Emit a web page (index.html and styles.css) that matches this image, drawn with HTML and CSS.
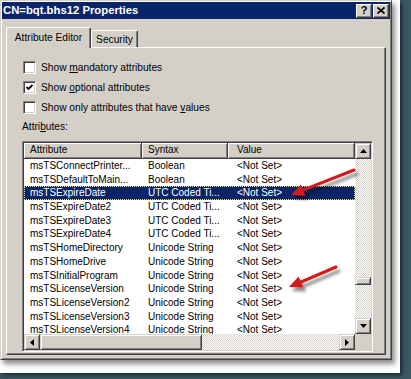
FILE: index.html
```html
<!DOCTYPE html>
<html>
<head>
<meta charset="utf-8">
<title>CN=bqt.bhs12 Properties</title>
<link rel="stylesheet" href="styles.css">
</head>
<body>
<div class="sheet">
  <div class="dialog">
    <div class="titlebar">
      <span class="title">CN=bqt.bhs12 Properties</span>
      <span class="tbtn help">?</span>
      <span class="tbtn close"><svg width="8" height="7" viewBox="0 0 8 7"><path d="M0.5 0.5 L7.5 6.5 M7.5 0.5 L0.5 6.5" stroke="#000" stroke-width="1.7"/></svg></span>
    </div>
    <div class="tabs">
      <div class="tab active">Attribute Editor</div>
      <div class="tab other">Security</div>
    </div>
    <div class="panel">
      <div class="check"><span class="box"></span><span>Show <u>m</u>andatory attributes</span></div>
      <div class="check"><span class="box"><svg width="9" height="9" viewBox="0 0 9 9"><path d="M1.5 4 L3.5 6 L7.5 2" fill="none" stroke="#000" stroke-width="1.8"/></svg></span><span>Show <u>o</u>ptional attributes</span></div>
      <div class="check"><span class="box"></span><span>Show only attributes that have <u>v</u>alues</span></div>
      <div class="caption">Attri<u>b</u>utes:</div>
      <div class="listbox">
        <div class="view">
          <div class="row head"><span>Attribute</span><span>Syntax</span><span>Value</span></div>
          <div class="row"><span>msTSConnectPrinter...</span><span>Boolean</span><span>&lt;Not Set&gt;</span></div>
          <div class="row"><span>msTSDefaultToMain...</span><span>Boolean</span><span>&lt;Not Set&gt;</span></div>
          <div class="row sel"><span>msTSExpireDate</span><span>UTC Coded Ti...</span><span>&lt;Not Set&gt;</span></div>
          <div class="row"><span>msTSExpireDate2</span><span>UTC Coded Ti...</span><span>&lt;Not Set&gt;</span></div>
          <div class="row"><span>msTSExpireDate3</span><span>UTC Coded Ti...</span><span>&lt;Not Set&gt;</span></div>
          <div class="row"><span>msTSExpireDate4</span><span>UTC Coded Ti...</span><span>&lt;Not Set&gt;</span></div>
          <div class="row"><span>msTSHomeDirectory</span><span>Unicode String</span><span>&lt;Not Set&gt;</span></div>
          <div class="row"><span>msTSHomeDrive</span><span>Unicode String</span><span>&lt;Not Set&gt;</span></div>
          <div class="row"><span>msTSInitialProgram</span><span>Unicode String</span><span>&lt;Not Set&gt;</span></div>
          <div class="row"><span>msTSLicenseVersion</span><span>Unicode String</span><span>&lt;Not Set&gt;</span></div>
          <div class="row"><span>msTSLicenseVersion2</span><span>Unicode String</span><span>&lt;Not Set&gt;</span></div>
          <div class="row"><span>msTSLicenseVersion3</span><span>Unicode String</span><span>&lt;Not Set&gt;</span></div>
          <div class="row"><span>msTSLicenseVersion4</span><span>Unicode String</span><span>&lt;Not Set&gt;</span></div>
        </div>
        <div class="vscroll">
          <span class="sbtn"><svg width="7" height="4" viewBox="0 0 7 4"><path d="M3.5 0 L7 4 L0 4 Z" fill="#000"/></svg></span>
          <div class="vtrack"><span class="gap"></span><span class="thumb"></span></div>
          <span class="sbtn"><svg width="7" height="4" viewBox="0 0 7 4"><path d="M0 0 L7 0 L3.5 4 Z" fill="#000"/></svg></span>
        </div>
        <div class="hscroll">
          <span class="sbtn"><svg width="4" height="7" viewBox="0 0 4 7"><path d="M0 3.5 L4 0 L4 7 Z" fill="#000"/></svg></span>
          <span class="thumb hthumb"></span>
          <span class="htrack"></span>
          <span class="sbtn"><svg width="4" height="7" viewBox="0 0 4 7"><path d="M0 0 L4 3.5 L0 7 Z" fill="#000"/></svg></span>
        </div>
        <div class="corner"></div>
      </div>
    </div>
  </div>
  <svg class="arrows" width="411" height="379" viewBox="0 0 411 379">
    <defs>
      <filter id="sh" x="-30%" y="-50%" width="180%" height="220%">
        <feDropShadow dx="3" dy="4" stdDeviation="1.8" flood-color="#000" flood-opacity="0.45"/>
      </filter>
    </defs>
    <g filter="url(#sh)" fill="#d21a1a" stroke="#d21a1a">
      <line x1="354" y1="170" x2="303" y2="190.2" stroke-width="3" stroke-linecap="round"/>
      <polygon points="291,195 305.3,195.8 300.9,184.6" stroke="none"/>
      <line x1="336" y1="267" x2="301" y2="282" stroke-width="3" stroke-linecap="round"/>
      <polygon points="289,287 303.3,287.4 298.6,276.4" stroke="none"/>
    </g>
  </svg>
</div>
</body>
</html>
```

FILE: styles.css
```css
* { box-sizing: border-box; margin: 0; padding: 0; }
html, body { width: 411px; height: 379px; }
body {
  background: #3b5764;
  overflow: hidden;
  font-family: "Liberation Sans", Arial, sans-serif;
  font-size: 10.2px;
  color: #000;
}
.sheet {
  position: relative;
  width: 400px;
  height: 373px;
  background: #fff;
  box-shadow: 2px 2px 4px rgba(0,0,0,.55);
}
.dialog {
  width: 392px;
  height: 360px;
  background: #d4d0c8;
  border: 1px solid;
  border-color: #d4d0c8 #404040 #404040 #d4d0c8;
  box-shadow: inset 1px 1px #fff, inset -1px -1px #808080, 3px 4px 5px rgba(0,0,0,.45);
  padding: 1px;
  display: flex;
  flex-direction: column;
}
.titlebar {
  height: 17px;
  flex: none;
  background: #0a246a;
  display: flex;
  align-items: center;
  padding: 0 1px;
  gap: 1px;
}
.title {
  flex: 1;
  color: #fff;
  font-weight: bold;
  font-size: 11.3px;
  line-height: 17px;
  white-space: nowrap;
}
.tbtn {
  width: 16px;
  height: 14px;
  background: #d4d0c8;
  border: 1px solid;
  border-color: #fff #404040 #404040 #fff;
  box-shadow: inset -1px -1px #808080;
  display: flex;
  align-items: center;
  justify-content: center;
  font-weight: bold;
  font-size: 11px;
  line-height: 1;
}
.tabs {
  flex: none;
  height: 28px;
  display: flex;
  align-items: flex-end;
  padding-left: 4px;
}
.tab {
  text-align: center;
  background: #d4d0c8;
  border: 1px solid;
  border-bottom: 0;
  border-color: #fff #404040 transparent #fff;
  box-shadow: inset -1px 0 #808080;
  border-radius: 2px 2px 0 0;
  line-height: 15px;
  white-space: nowrap;
}
.tab.active {
  width: 85px;
  height: 21px;
  padding-top: 2px;
  margin-bottom: -1px;
  position: relative;
  z-index: 1;
}
.tab.other {
  width: 47px;
  height: 17px;
  padding-top: 1px;
}
.panel {
  flex: none;
  width: 380px;
  height: 308px;
  margin-left: 4px;
  border: 1px solid;
  border-color: #fff #404040 #404040 #fff;
  box-shadow: inset -1px -1px #808080;
  padding: 9px 10px 0 15px;
  display: flex;
  flex-direction: column;
}
.check {
  height: 20px;
  display: flex;
  align-items: center;
  gap: 5px;
  padding-left: 1px;
  white-space: nowrap;
}
.box {
  width: 13px;
  height: 13px;
  flex: none;
  background: #fff;
  border: 1px solid;
  border-color: #808080 #fff #fff #808080;
  box-shadow: inset 1px 1px #404040, inset -1px -1px #d4d0c8;
  display: flex;
  align-items: center;
  justify-content: center;
}
.caption {
  height: 20px;
  line-height: 20px;
}
.listbox {
  width: 351px;
  height: 211px;
  margin-top: 4px;
  border: 1px solid;
  border-color: #808080 #fff #fff #808080;
  box-shadow: inset 1px 1px #404040, inset -1px -1px #d4d0c8;
  padding: 1px;
  background: #fff;
  display: grid;
  grid-template-columns: 331px 16px;
  grid-template-rows: 191px 16px;
}
.view {
  overflow: hidden;
  font-size: 10px;
  background: #fff;
}
.row {
  display: grid;
  grid-template-columns: 118px 86px 127px;
  height: 13.7px;
  line-height: 13.7px;
  white-space: nowrap;
}
.row span {
  padding-left: 6px;
  overflow: hidden;
}
.row span:nth-child(3) { padding-left: 9px; }
.row.head {
  height: 16px;
  line-height: 14px;
}
.row.head span {
  background: #d4d0c8;
  border-right: 1px solid #404040;
  border-bottom: 1px solid #404040;
  box-shadow: inset 1px 1px #fff, inset -1px -1px #808080;
}
.row.sel {
  background: #0a246a;
  color: #fff;
  outline: 1px dotted #e8e0a0;
  outline-offset: -1px;
}
.sbtn, .thumb {
  background: #d4d0c8;
  border: 1px solid;
  border-color: #d4d0c8 #404040 #404040 #d4d0c8;
  box-shadow: inset 1px 1px #fff, inset -1px -1px #808080;
}
.sbtn {
  width: 16px;
  height: 16px;
  flex: none;
  display: flex;
  align-items: center;
  justify-content: center;
}
.vscroll {
  display: flex;
  flex-direction: column;
}
.vtrack, .htrack {
  flex: 1;
  background-color: #d4d0c8;
  background-image: repeating-conic-gradient(#fff 0 25%, transparent 0 50%);
  background-size: 2px 2px;
}
.vtrack {
  display: grid;
  grid-template-rows: 118px 8px 1fr;
}
.vtrack .thumb { height: 8px; }
.hscroll {
  display: flex;
}
.hthumb {
  width: 162px;
  flex: none;
}
.corner { background: #d4d0c8; }
.arrows {
  position: absolute;
  left: 0;
  top: 0;
  pointer-events: none;
}
```
